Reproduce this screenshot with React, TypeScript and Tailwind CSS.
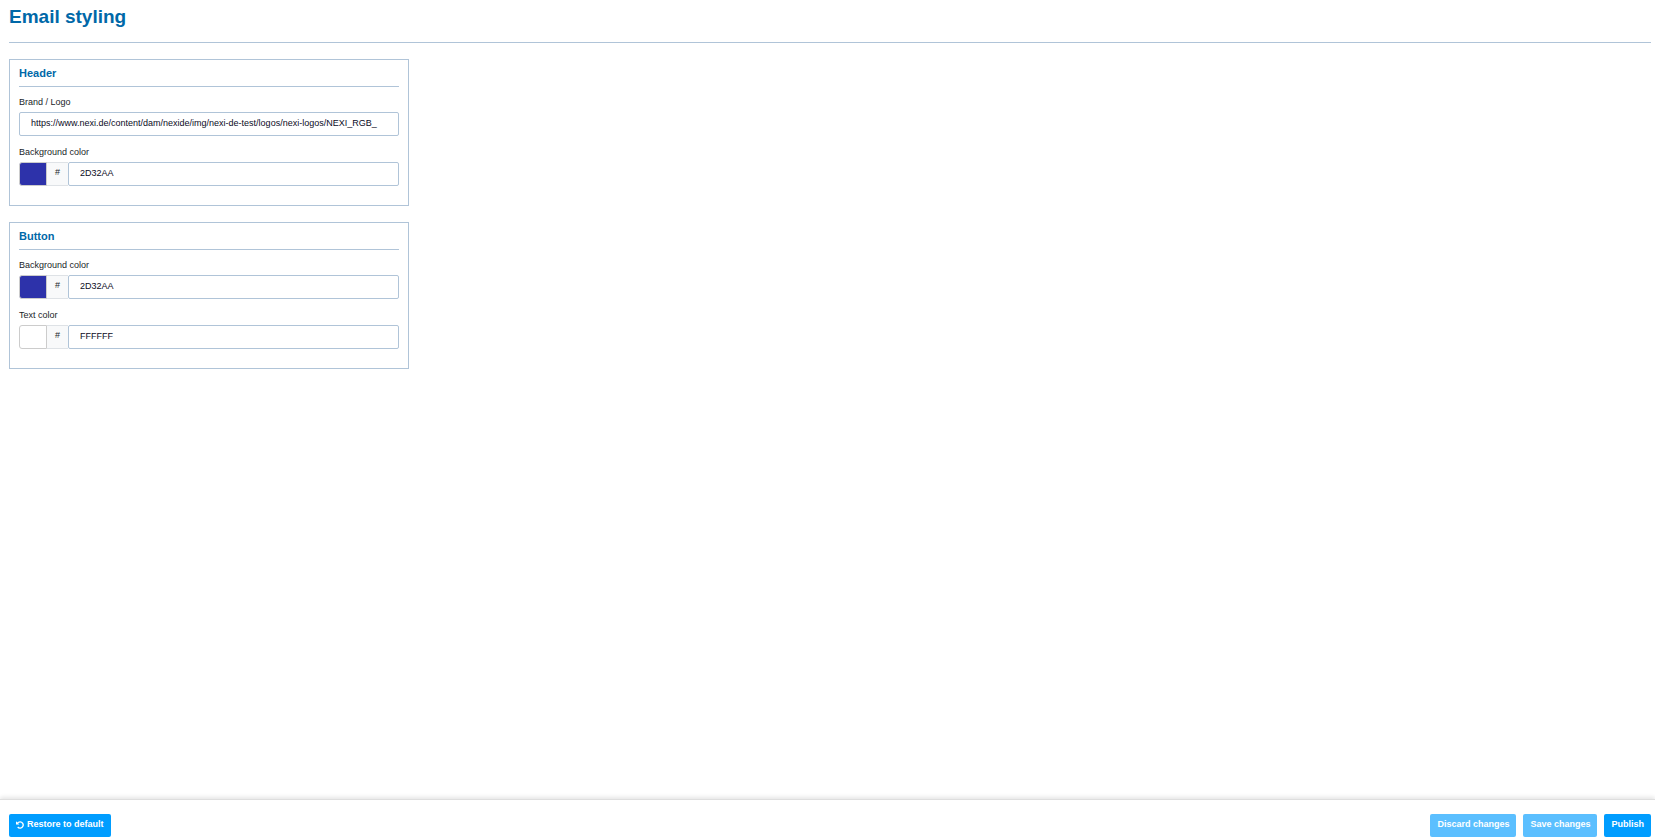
import { useState } from "react";
import type { ReactNode } from "react";

const LOGO_URL =
  "https://www.nexi.de/content/dam/nexide/img/nexi-de-test/logos/nexi-logos/NEXI_RGB_";

const inputClass =
  "h-6 min-w-0 flex-1 rounded-[2px] border border-[#b0c4d8] bg-white px-[11px] pb-[3px] text-[9px] text-[#0b0b1e] outline-none";

const buttonClass =
  "flex h-[23px] items-center gap-[3px] rounded-[2px] bg-[#009dff] px-[7px] pb-px text-[9px] font-bold text-white disabled:bg-[#5bbfff]";

function UndoIcon() {
  return (
    <svg viewBox="0 0 8 8" className="mb-px size-2" fill="none" aria-hidden="true">
      <path
        d="M1.500 2.200C2.200 1.200 3.100 0.900 4.100 0.900a3.100 3.100 0 1 1-2.400 5.100"
        stroke="currentColor"
        strokeWidth="1.4"
      />
      <path d="M0 0.200v3.300h3.400z" fill="currentColor" />
    </svg>
  );
}

function Panel({ title, children }: { title: string; children: ReactNode }) {
  return (
    <section className="w-full max-w-[400px] border border-[#b0c4d8] px-[9px] pb-[19px]">
      <h2 className="border-b border-[#b0c4d8] pt-[5px] pb-[5px] text-[11px] leading-4 font-bold text-[#0068a8]">
        {title}
      </h2>
      <div className="mt-2 flex flex-col gap-[9px]">{children}</div>
    </section>
  );
}

function Field({
  id,
  label,
  children,
}: {
  id: string;
  label: string;
  children: ReactNode;
}) {
  return (
    <div>
      <label
        htmlFor={id}
        className="block h-[17px] text-[9px] leading-[14px] text-[#212529]"
      >
        {label}
      </label>
      <div className="flex">{children}</div>
    </div>
  );
}

function ColorField({
  id,
  label,
  initial,
}: {
  id: string;
  label: string;
  initial: string;
}) {
  const [color, setColor] = useState(initial);

  return (
    <Field id={id} label={label}>
      <button
        type="button"
        aria-label={`Pick ${label.toLowerCase()}`}
        className="h-6 w-7 rounded-l-[3px] border border-[#cccccc]"
        style={{ backgroundColor: `#${color}` }}
      />
      <span className="flex h-6 w-[21px] items-center justify-center border-y border-[#dee2e6] bg-[#f8f9fa] pb-[3px] text-[9px] text-[#212529]">
        #
      </span>
      <input
        id={id}
        className={inputClass}
        value={color}
        onChange={(e) => setColor(e.target.value)}
      />
    </Field>
  );
}

export default function App() {
  const [logo, setLogo] = useState(LOGO_URL);

  return (
    <div className="flex min-h-screen flex-col bg-white font-['Liberation_Sans',Arial,sans-serif]">
      <main className="flex-1 pr-1 pl-[9px]">
        <h1 className="border-b border-[#b0c4d8] pt-[5px] pb-[13px] text-[19px] leading-6 font-bold text-[#0068a8]">
          Email styling
        </h1>

        <div className="mt-4 flex flex-col gap-4">
          <Panel title="Header">
            <Field id="logo" label="Brand / Logo">
              <input
                id="logo"
                className={inputClass}
                value={logo}
                onChange={(e) => setLogo(e.target.value)}
              />
            </Field>
            <ColorField
              id="header-background"
              label="Background color"
              initial="2D32AA"
            />
          </Panel>

          <Panel title="Button">
            <ColorField
              id="button-background"
              label="Background color"
              initial="2D32AA"
            />
            <ColorField id="button-text" label="Text color" initial="FFFFFF" />
          </Panel>
        </div>
      </main>

      <footer className="flex justify-between border-t border-[#dedede] pt-[14px] pr-1 pb-[3px] pl-[9px] shadow-[0_-2px_4px_rgba(0,0,0,0.1)]">
        <button type="button" className={buttonClass}>
          <UndoIcon />
          Restore to default
        </button>
        <div className="flex gap-[7px]">
          <button type="button" disabled className={buttonClass}>
            Discard changes
          </button>
          <button type="button" disabled className={buttonClass}>
            Save changes
          </button>
          <button type="button" className={buttonClass}>
            Publish
          </button>
        </div>
      </footer>
    </div>
  );
}
